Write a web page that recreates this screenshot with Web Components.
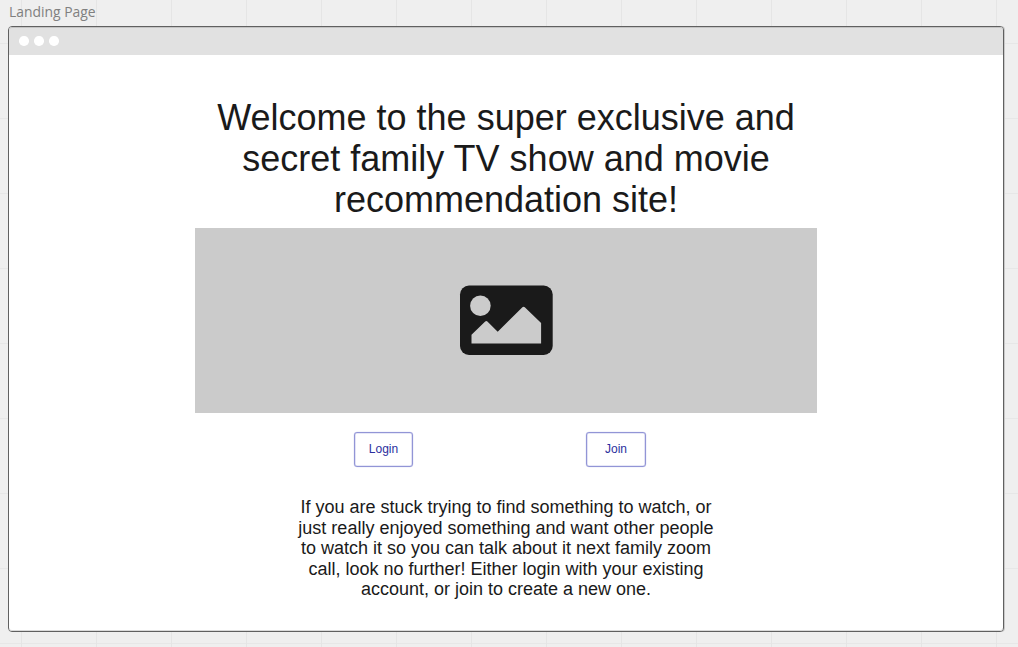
<!DOCTYPE html>
<html lang="en">
<head>
<meta charset="utf-8">
<title>Landing Page</title>
<style>
html, body { margin: 0; height: 100%; overflow: hidden; }
</style>
</head>
<body>
<wire-board label="Landing Page">
  <browser-frame>
    <hero-title>Welcome to the super exclusive and secret family TV show and movie recommendation site!</hero-title>
    <image-placeholder></image-placeholder>
    <action-row>
      <wire-button>Login</wire-button>
      <wire-button>Join</wire-button>
    </action-row>
    <intro-text>If you are stuck trying to find something to watch, or just really enjoyed something and want other people to watch it so you can talk about it next family zoom call, look no further! Either login with your existing account, or join to create a new one.</intro-text>
  </browser-frame>
</wire-board>
<script>
const define = (name, html) => customElements.define(name, class extends HTMLElement {
  constructor() {
    super();
    this.attachShadow({ mode: 'open' }).innerHTML = html;
  }
  connectedCallback() {
    const label = this.shadowRoot.querySelector('[data-label]');
    if (label) label.textContent = this.getAttribute('label');
  }
});

define('wire-board', `
<style>
:host {
  display: flex; flex-direction: column; box-sizing: border-box;
  width: 1018px; height: 647px; padding: 0 14px 0 8px;
  font-family: "Liberation Sans", Arial, sans-serif; color: #1a1a1a;
  background:
    linear-gradient(90deg, #e5e5e5 1px, transparent 1px) 21px 0 / 75px 75px,
    linear-gradient(#e7e7e7 1px, transparent 1px) 0 43px / 75px 75px,
    #efefef;
}
.label {
  height: 26px; line-height: 24px; padding-left: 1px;
  font-family: "Open Sans", sans-serif; font-size: 13.9px; color: #808080;
}
</style>
<div class="label" data-label></div>
<slot></slot>`);

define('browser-frame', `
<style>
:host {
  display: flex; flex-direction: column; box-sizing: border-box;
  width: 996px; height: 606px; border: 1px solid #606060; border-radius: 4px;
  background: #fff; box-shadow: 1px 0 0 #c9c9c9;
}
.bar {
  display: flex; align-items: center; gap: 5.5px; box-sizing: border-box;
  height: 28px; padding-left: 10px; background: #e1e1e1; flex: none;
  border-radius: 3px 3px 0 0; box-shadow: inset 0 1px 0 #c4c4c4;
}
.bar i { width: 9.5px; height: 9.5px; border-radius: 50%; background: #fff; }
.page {
  display: flex; flex-direction: column; align-items: center; flex: 1;
  padding-top: 42px; border-radius: 0 0 3px 3px; box-shadow: inset 0 -1px 0 #dadada;
}
</style>
<div class="bar"><i></i><i></i><i></i></div>
<div class="page"><slot></slot></div>`);

define('hero-title', `
<style>
:host { display: block; width: 622px; height: 131px; text-align: center; font-size: 36px; line-height: 41px; }
</style>
<slot></slot>`);

define('image-placeholder', `
<style>
:host { display: flex; justify-content: center; width: 622px; height: 184.5px; background: #cbcbcb; }
svg { display: block; width: 622px; height: 184.5px; }
</style>
<svg viewBox="195 228 622 184.5">
  <rect x="460" y="285.5" width="92.7" height="69.5" rx="9" fill="#1a1a1a"/>
  <circle cx="480.4" cy="305.7" r="10.3" fill="#cbcbcb"/>
  <path d="M471.5 343.4V334.8L485.2 321.4Q486.3 320.6 487.4 321.4L497.7 331.7L522.4 307.2Q523.6 306.2 524.8 307.2L541.1 323V343.4Z" fill="#cbcbcb"/>
</svg>`);

define('action-row', `
<style>
:host { display: flex; gap: 173px; margin-top: 19px; padding-right: 12.5px; }
</style>
<slot></slot>`);

define('wire-button', `
<style>
:host {
  display: flex; align-items: center; justify-content: center; box-sizing: border-box;
  width: 59.5px; height: 35.5px; border: 1px solid #9295d6; border-radius: 3px;
  box-shadow: inset 0 0 0 0.6px #d0d1ef, 0 0 0 0.3px #d8d9f2;
  font-size: 12px; color: #2b2f9e; background: #fff;
}
</style>
<span><slot></slot></span>`);

define('intro-text', `
<style>
:host { display: block; width: 426px; margin-top: 30px; text-align: center; font-size: 18px; line-height: 20.6px; }
</style>
<slot></slot>`);
</script>
</body>
</html>
